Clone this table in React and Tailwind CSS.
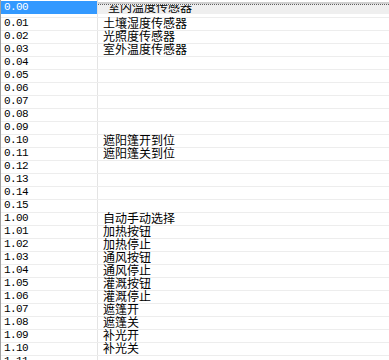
const rows = [
  ["0.00", "室内温度传感器"],
  ["0.01", "土壤湿度传感器"],
  ["0.02", "光照度传感器"],
  ["0.03", "室外温度传感器"],
  ["0.04", ""],
  ["0.05", ""],
  ["0.06", ""],
  ["0.07", ""],
  ["0.08", ""],
  ["0.09", ""],
  ["0.10", "遮阳篷开到位"],
  ["0.11", "遮阳篷关到位"],
  ["0.12", ""],
  ["0.13", ""],
  ["0.14", ""],
  ["0.15", ""],
  ["1.00", "自动手动选择"],
  ["1.01", "加热按钮"],
  ["1.02", "加热停止"],
  ["1.03", "通风按钮"],
  ["1.04", "通风停止"],
  ["1.05", "灌溉按钮"],
  ["1.06", "灌溉停止"],
  ["1.07", "遮篷开"],
  ["1.08", "遮篷关"],
  ["1.09", "补光开"],
  ["1.10", "补光关"],
  ["1.11", ""],
];

const mono = { fontFamily: '"Liberation Mono", "DejaVu Sans Mono", monospace' };
const cjk = { fontFamily: '"Noto Sans CJK SC", "Noto Sans", sans-serif' };

export default function App() {
  const [first, ...rest] = rows;

  return (
    <div className="w-[389px] h-[360px] overflow-hidden bg-white border-l border-[#a0a0a0] text-black">
      {/* first row: selected address + cell being edited */}
      <div className="flex h-[17px]">
        <div className="w-[96px] pt-[1px]">
          <div
            className="h-[13px] bg-[#3399ff] text-white pl-[3px] text-[11px] tracking-[-0.6px] leading-[13px]"
            style={mono}
          >
            {first[0]}
          </div>
        </div>
        <div className="flex-1 border-l border-[#e4e4e4] pt-[2px]">
          <div className="h-[2px] bg-[#d0d0d0]" />
          <div className="border-t border-dotted border-[#606060] bg-[#efefef] h-[10px] overflow-hidden pl-[10px]">
            <div className="text-[12px] leading-[12px] -mt-[4px]" style={cjk}>
              {first[1]}
            </div>
          </div>
        </div>
      </div>

      {rest.map(([addr, name]) => (
        <div key={addr} className="flex h-[13px] border-t border-[#ededed]">
          <div
            className="w-[96px] pl-[3px] text-[11px] tracking-[-0.6px] leading-[11px]"
            style={mono}
          >
            {addr}
          </div>
          <div
            className="flex-1 border-l border-[#e4e4e4] pl-[5px] text-[12px] leading-[9px] whitespace-nowrap"
            style={cjk}
          >
            {name}
          </div>
        </div>
      ))}
    </div>
  );
}
